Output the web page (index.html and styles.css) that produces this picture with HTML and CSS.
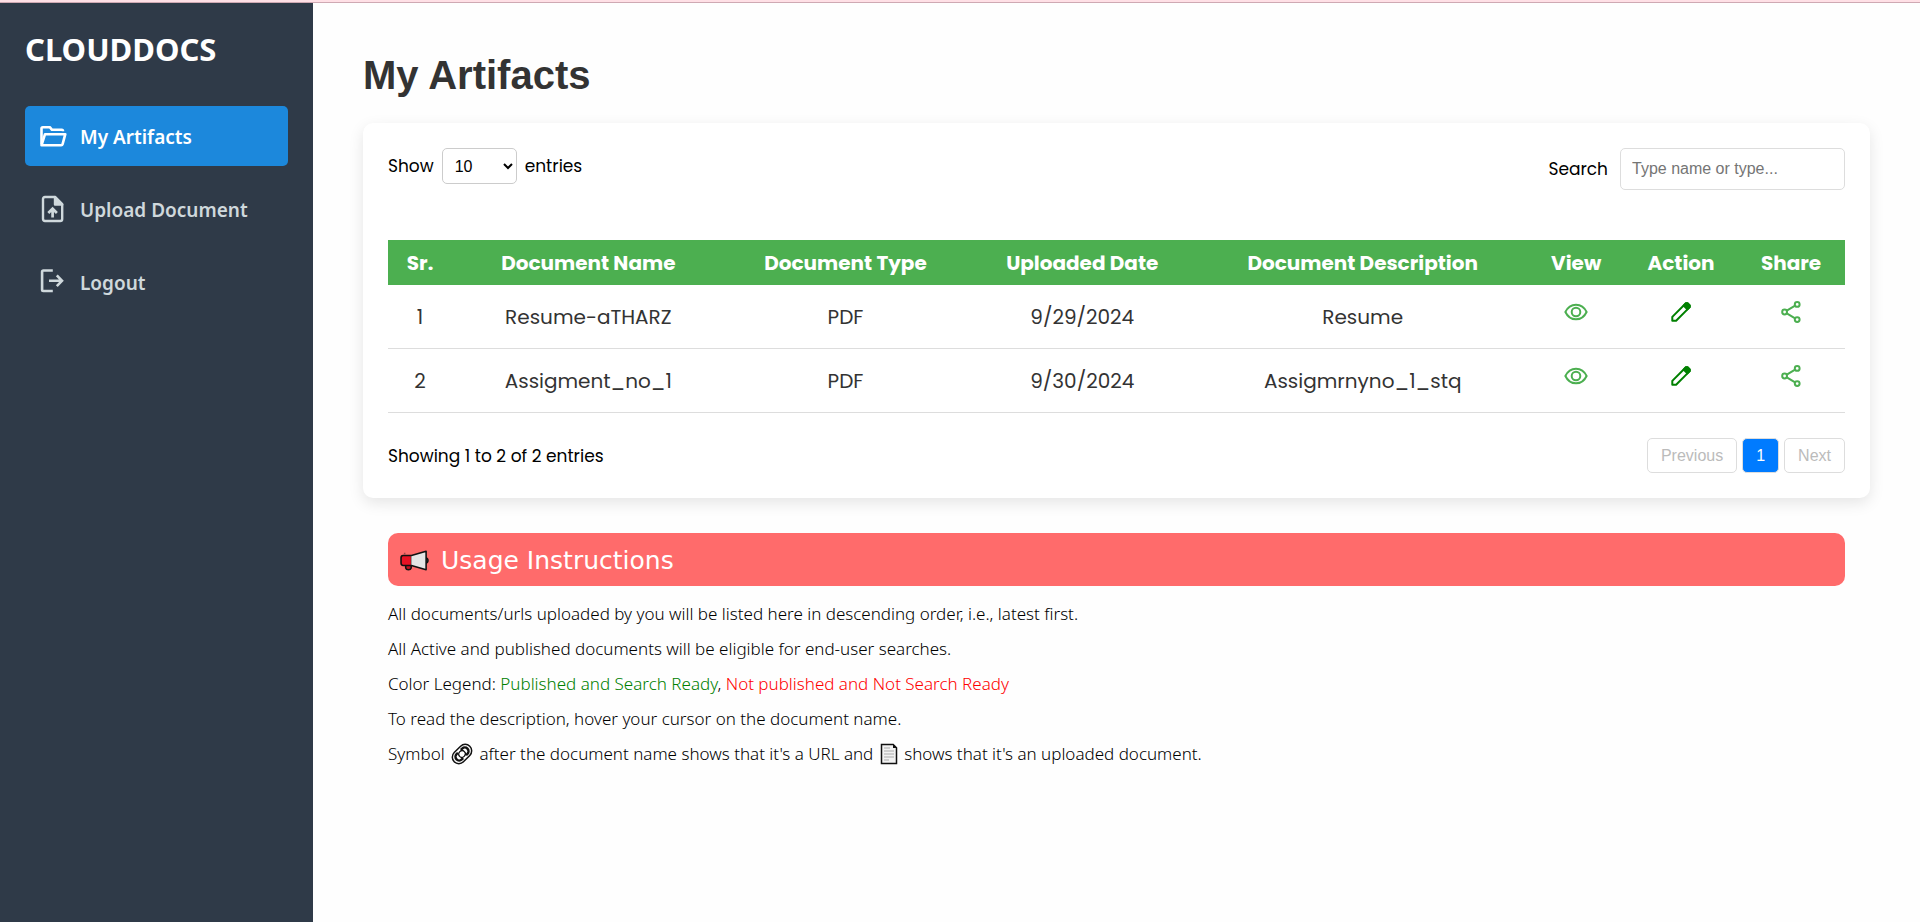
FILE: index.html
```html
<!DOCTYPE html>
<html lang="en">
<head>
<meta charset="utf-8">
<title>CloudDocs - My Artifacts</title>
<link rel="stylesheet" href="styles.css">
</head>
<body>
<svg class="sprite" aria-hidden="true">
  <symbol id="eye" viewBox="0 0 24 18" fill="none" stroke="currentColor" stroke-width="2">
    <path d="M1.400 9C3.600 4.300 7.500 1.700 12 1.700S20.400 4.300 22.600 9C20.400 13.700 16.500 16.300 12 16.300S3.600 13.700 1.400 9Z"/><circle cx="12" cy="9" r="4.300"/>
  </symbol>
  <symbol id="pencil" viewBox="0 0 20 20" fill="none" stroke="currentColor" stroke-width="2" stroke-linejoin="round">
    <path d="M1.300 18.700v-3.800L14.900 1.300h1.600l2.200 2.200v1.600L5.100 18.700Z"/><path d="M12.600 3.600 14.900 1.300h1.600l2.200 2.200v1.600l-2.300 2.300Z" fill="currentColor"/>
  </symbol>
  <symbol id="share" viewBox="0 0 20 22" fill="none" stroke="currentColor" stroke-width="2">
    <circle cx="3.600" cy="11" r="2.400"/><circle cx="16.200" cy="3.400" r="2.400"/><circle cx="16.200" cy="18.600" r="2.400"/><path d="m5.800 9.700 8.300-5M5.800 12.300l8.300 5"/>
  </symbol>
</svg>
<div class="strip"></div>
<div class="app">
  <aside class="sidebar">
    <div class="brand">CLOUDDOCS</div>
    <nav class="nav">
      <a class="nav-link active" href="#artifacts">
        <svg class="nav-icon" viewBox="0 0 28 28" fill="none" stroke="currentColor" stroke-width="2.600" stroke-linejoin="round"><path d="M2.500 22.500v-16q0-1.300 1.300-1.300h7l2.200 2.600h9.700q1.300 0 1.300 1.400"/><path d="M2.500 23.300 6 12.200h20.300l-2.700 10q-.3 1.100-1.400 1.100Z"/></svg>
        <span>My Artifacts</span>
      </a>
      <a class="nav-link" href="#upload">
        <svg class="nav-icon" viewBox="0 0 28 28" fill="none" stroke="currentColor" stroke-width="2.400" stroke-linejoin="round"><path d="M4 4q0-2 2-2h10.200l7 7v15q0 2-2 2H6q-2 0-2-2Z"/><path d="M16 2v7.500h7.200Z" fill="currentColor"/><path d="M13.600 22.500v-8M9.300 18l4.300-4.300L17.900 18" stroke-linejoin="miter" stroke-width="2.700"/></svg>
        <span>Upload Document</span>
      </a>
      <a class="nav-link" href="#logout">
        <svg class="nav-icon" viewBox="0 0 28 28" fill="none" stroke="currentColor" stroke-width="2.600" stroke-linejoin="round"><path d="M13.800 2.500H4.300q-1.200 0-1.200 1.200v18.100q0 1.200 1.200 1.200h9.500M10 12.800h13M17.800 7.400l5.200 5.400-5.200 5.400" stroke-linejoin="miter"/></svg>
        <span>Logout</span>
      </a>
    </nav>
  </aside>
  <main class="main">
    <h1 class="title">My Artifacts</h1>
    <section class="card">
      <div class="toolbar">
        <div class="length">
          <label for="length">Show</label>
          <select id="length" class="length-select"><option>10</option><option>25</option><option>50</option></select>
          <span>entries</span>
        </div>
        <div class="search">
          <label for="search">Search</label>
          <input id="search" class="search-input" type="text" placeholder="Type name or type...">
        </div>
      </div>
      <table class="table">
        <colgroup><col class="c-sr"><col class="c-name"><col class="c-type"><col class="c-date"><col class="c-desc"><col class="c-view"><col class="c-action"><col class="c-share"></colgroup>
        <thead>
          <tr><th>Sr.</th><th>Document Name</th><th>Document Type</th><th>Uploaded Date</th><th>Document Description</th><th>View</th><th>Action</th><th>Share</th></tr>
        </thead>
        <tbody>
          <tr><td>1</td><td>Resume-aTHARZ</td><td>PDF</td><td>9/29/2024</td><td>Resume</td>
            <td><button class="icon-btn" aria-label="View"><svg class="i-eye"><use href="#eye"/></svg></button></td>
            <td><button class="icon-btn edit" aria-label="Edit"><svg class="i-pencil"><use href="#pencil"/></svg></button></td>
            <td><button class="icon-btn" aria-label="Share"><svg class="i-share"><use href="#share"/></svg></button></td></tr>
          <tr><td>2</td><td>Assigment_no_1</td><td>PDF</td><td>9/30/2024</td><td>Assigmrnyno_1_stq</td>
            <td><button class="icon-btn" aria-label="View"><svg class="i-eye"><use href="#eye"/></svg></button></td>
            <td><button class="icon-btn edit" aria-label="Edit"><svg class="i-pencil"><use href="#pencil"/></svg></button></td>
            <td><button class="icon-btn" aria-label="Share"><svg class="i-share"><use href="#share"/></svg></button></td></tr>
        </tbody>
      </table>
      <div class="footer">
        <span>Showing 1 to 2 of 2 entries</span>
        <div class="pager">
          <button class="page" disabled>Previous</button>
          <button class="page current">1</button>
          <button class="page" disabled>Next</button>
        </div>
      </div>
    </section>
    <section class="usage">
      <h2 class="banner">
        <svg class="megaphone" viewBox="0 0 28 20" stroke="#111" stroke-width="1.500" stroke-linejoin="round"><path d="M5.500 13v4.200q.4 1.800 2.600 1.800t2.700-1.800V13Z" fill="#c50f1f"/><path d="M24.800 7.300q2.200.6 2.200 2.700t-2.200 2.700Z" fill="#777"/><path d="M10.200 5.300 25.200 1v18l-15-4.300Z" fill="#e5e5e5"/><path d="M10.500 5.200H3Q1 5.200 1 7.500v5q0 2.300 2 2.300h7.500" fill="#e81224"/><path d="M4.500 4.300V2.500" stroke="#9b4a4a"/></svg>
        <span>Usage Instructions</span>
      </h2>
      <div class="notes">
        <p>All documents/urls uploaded by you will be listed here in descending order, i.e., latest first.</p>
        <p>All Active and published documents will be eligible for end-user searches.</p>
        <p>Color Legend: <span class="published">Published and Search Ready</span>, <span class="unpublished">Not published and Not Search Ready</span></p>
        <p>To read the description, hover your cursor on the document name.</p>
        <p>Symbol <svg class="glyph" viewBox="0 0 22 22" fill="none"><g transform="rotate(-45 11 11)"><rect x="0" y="4.500" width="22" height="13" rx="6.500" fill="#fff" stroke="#111" stroke-width="1.500"/><path d="M9 7.300H7a3.700 3.700 0 0 0 0 7.400h2M13 7.300h2a3.700 3.700 0 0 1 0 7.400h-2" stroke="#111" stroke-width="2.400"/><rect x="7.600" y="7.800" width="6.800" height="6.400" rx="3.200" fill="#fff" stroke="#111" stroke-width="1.300"/></g></svg> after the document name shows that it's a URL and <svg class="glyph sheet" viewBox="0 0 18 22"><path d="M1.500 1.500h11.700l3.300 3.300v15.700h-15Z" fill="#f2f2f2" stroke="#111" stroke-width="1.500"/><path d="M13 1v4h4Z" fill="#111"/><path d="M4 5h6M4 8h10M4 11h10M4 14h10M4 17h5" stroke="#aaa"/></svg> shows that it's an uploaded document.</p>
      </div>
    </section>
  </main>
</div>
</body>
</html>
```
FILE: styles.css
```css
* { box-sizing: border-box; }
body { margin: 0; min-height: 100vh; display: flex; flex-direction: column; background: #fefefe; color: #000; font: 16px/24px Poppins, Inter, sans-serif; }
.sprite { position: absolute; width: 0; height: 0; }
.strip { height: 3px; background: #ffe0e6; border-bottom: 1px solid #cfa9b3; }
.app { flex: 1; display: flex; }

.sidebar { flex: none; width: 313px; padding: 26px 25px; background: #2f3a48; font-family: "Segoe UI", "Noto Sans", sans-serif; }
.brand { margin-bottom: 37px; color: #fff; font-size: 31px; line-height: 40px; font-weight: 700; }
.nav { display: flex; flex-direction: column; gap: 13px; }
.nav-link { display: flex; align-items: center; gap: 13px; height: 60px; padding: 0 14px; border-radius: 5px; color: #cfd8dc; font-size: 19px; font-weight: 600; text-decoration: none; }
.nav-link span { padding-top: 1px; }
.nav-link.active { background: #1c88dc; color: #fff; }
.nav-icon { width: 28px; height: 28px; }

.main { flex: 1; padding: 48px 50px; }
.title { margin: 0 0 24px; color: #333; font: 700 40px/48px "Liberation Sans", sans-serif; }
.card { padding: 25px; border-radius: 10px; background: #fff; box-shadow: 0 5px 15px rgba(0, 0, 0, 0.1); }
.toolbar { display: flex; justify-content: space-between; align-items: flex-start; margin-bottom: 50px; font-size: 17px; }
.length { display: flex; align-items: center; gap: 8px; height: 36px; }
.length-select { width: 75px; height: 36px; padding: 0 8px; border: 1px solid #ccc; border-radius: 5px; background: #fff; font: 16px "Liberation Sans", sans-serif; }
.search { display: flex; align-items: center; gap: 12px; }
.search-input { width: 225px; height: 42px; padding: 0 11px; border: 1px solid #ddd; border-radius: 5px; font: 16px "Liberation Sans", sans-serif; }
.search-input::placeholder { color: #757575; }

.table { width: 100%; table-layout: fixed; border-collapse: separate; border-spacing: 0; text-align: center; }
.c-sr { width: 4.4%; }
.c-name { width: 18.7%; }
.c-type { width: 16.6%; }
.c-date { width: 15.9%; }
.c-desc { width: 22.6%; }
.c-view { width: 6.7%; }
.c-action { width: 7.7%; }
.c-share { width: 7.4%; }
.table th { height: 45px; padding: 0; background: #4caf50; color: #fff; font-size: 20px; font-weight: 700; }
.table td { height: 64px; padding: 0; border-bottom: 1px solid #ddd; color: #333; font-size: 20px; }
.icon-btn { display: flex; justify-content: center; align-items: center; width: 100%; height: 32px; margin-bottom: 9px; padding: 0; border: 0; background: none; color: #4caf50; }
.icon-btn.edit { color: green; }
.i-eye { width: 24px; height: 18px; }
.i-pencil { width: 20px; height: 20px; }
.i-share { width: 20px; height: 22px; }

.footer { display: flex; justify-content: space-between; align-items: center; margin-top: 25px; font-size: 17px; }
.pager { display: flex; gap: 5px; }
.page { height: 35px; padding: 0 13px; border: 1px solid #ddd; border-radius: 5px; background: #fff; color: #bbb; font: 16px "Liberation Sans", sans-serif; }
.page.current { background: #007bff; color: #fff; }

.usage { margin-top: 35px; padding: 0 25px; }
.banner { display: flex; align-items: center; gap: 12px; height: 53px; margin: 0; padding: 2px 12px 0; border-radius: 10px; background: #ff6b6b; color: #fff; font: 400 25px/30px Verdana, "DejaVu Sans", sans-serif; }
.megaphone { width: 29px; height: 21px; }
.notes { display: flex; flex-direction: column; gap: 11px; margin-top: 16px; font: 300 17px/24px "Segoe UI", "Noto Sans", sans-serif; }
.notes p { margin: 0; }
.published { color: green; }
.unpublished { color: red; }
.glyph { width: 22px; height: 22px; margin: 0 2px; vertical-align: -5px; }
.glyph.sheet { width: 18px; }
```
